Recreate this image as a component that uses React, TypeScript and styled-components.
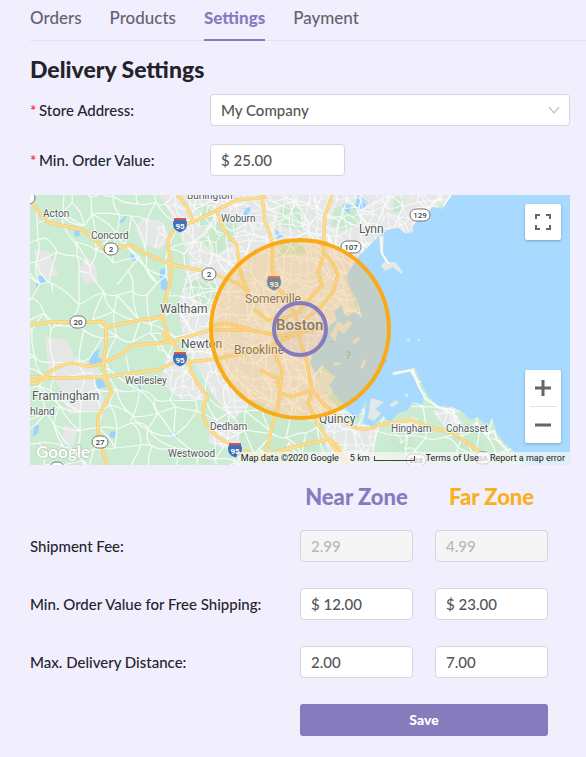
import React, { useState } from "react";
import styled, { createGlobalStyle } from "styled-components";

const purple = "#867bbd";
const orange = "#fbaf1b";

const GlobalStyle = createGlobalStyle`
  * { box-sizing: border-box; }
  body {
    margin: 0;
    background: #f1effd;
    color: #26232f;
    font-family: Lato, "Open Sans", sans-serif;
    font-size: 15px;
    line-height: 20px;
  }
  button, input, select { font: inherit; }
`;

const Page = styled.main`
  padding: 0 16px 22px 30px;
`;

const Tabs = styled.nav`
  display: flex;
  gap: 28px;
  height: 41px;
  margin-right: -16px;
  border-bottom: 1px solid #e3e0f0;
`;

const Tab = styled.a<{ $active?: boolean }>`
  height: 41px;
  padding-top: 8px;
  color: ${(p) => (p.$active ? purple : "#646270")};
  border-bottom: 2px solid ${(p) => (p.$active ? purple : "transparent")};
  font-size: 17px;
  font-weight: ${(p) => (p.$active ? 900 : 500)};
  text-decoration: none;
`;

const Title = styled.h1`
  margin: 14px 0 11px;
  color: #242329;
  font-family: "Lato Black", Lato, sans-serif;
  font-size: 23px;
  font-weight: 900;
  line-height: 28px;
`;

const FormRow = styled.div`
  display: grid;
  grid-template-columns: 1fr 2fr;
  align-items: center;
  margin-bottom: 18px;
`;

const Label = styled.label<{ $required?: boolean }>`
  font-family: "Lato Medium", Lato, sans-serif;
  font-weight: 500;
  &::before {
    content: ${(p) => (p.$required ? '"*"' : "none")};
    display: inline-block;
    width: 9px;
    color: #f5222d;
  }
`;

const Input = styled.input`
  width: 100%;
  height: 32px;
  padding: 0 10px;
  border: 1px solid #d6d4dc;
  border-radius: 4px;
  background: #fff;
  color: #555;
  font-family: "Lato Medium", Lato, sans-serif;
  font-weight: 500;
  &:disabled {
    background: #f5f5f5;
    color: #b8b8b8;
  }
`;

const ShortField = styled.div`
  width: 37.5%;
`;

const SelectBox = styled.div`
  display: grid;
  align-items: center;
  > * { grid-area: 1 / 1; }
  > svg {
    justify-self: end;
    margin-right: 10px;
    pointer-events: none;
  }
`;

const Select = styled.select`
  appearance: none;
  width: 100%;
  height: 32px;
  padding: 0 30px 0 10px;
  border: 1px solid #d6d4dc;
  border-radius: 4px;
  background: #fff;
  color: #555;
  font-family: "Lato Medium", Lato, sans-serif;
  font-weight: 500;
`;

const MapFrame = styled.section`
  position: relative;
  height: 270px;
  margin-top: 19px;
  overflow: hidden;
  font-family: Roboto, sans-serif;
`;

const MapDrawing = styled.svg`
  display: block;
  width: 100%;
  height: 100%;
`;

const MapControls = styled.div`
  position: absolute;
  top: 9px;
  right: 9px;
  bottom: 22px;
  display: flex;
  flex-direction: column;
  justify-content: space-between;
`;

const ControlGroup = styled.div`
  display: flex;
  flex-direction: column;
  align-items: center;
  width: 36px;
  border-radius: 2px;
  background: #fff;
  box-shadow: 0 1px 3px rgba(0, 0, 0, 0.25);
`;

const ControlButton = styled.button`
  display: grid;
  place-items: center;
  width: 36px;
  height: 36px;
  padding: 0;
  border: 0;
  background: transparent;
`;

const ControlRule = styled.span`
  width: 27px;
  height: 1px;
  background: #e2e2e2;
`;

const Attribution = styled.footer`
  position: absolute;
  right: 0;
  bottom: 0;
  display: flex;
  align-items: center;
  gap: 11px;
  height: 13px;
  padding: 0 5px 0 4px;
  background: rgba(245, 245, 245, 0.72);
  color: #222;
  font-family: Roboto, sans-serif;
  font-size: 9px;
  line-height: 13px;
  white-space: nowrap;
  a { color: inherit; text-decoration: none; }
`;

const Scale = styled.span`
  display: flex;
  align-items: center;
  gap: 4px;
`;

const ScaleBar = styled.i`
  width: 41px;
  height: 5px;
  border: solid #444;
  border-width: 0 1px 1px;
`;

const Zones = styled.section`
  padding-top: 18px;
`;

const ZoneRow = styled.div`
  display: grid;
  grid-template-columns: 2fr 1fr 1fr;
  align-items: center;
  margin-bottom: 26px;
`;

const ZoneCell = styled.div`
  padding-right: 22px;
`;

const ZoneTitle = styled.h2<{ $tone: string }>`
  margin: 0;
  color: ${(p) => p.$tone};
  font-family: "Lato Black", Lato, sans-serif;
  font-size: 22px;
  font-weight: 900;
  line-height: 28px;
  text-align: center;
  white-space: nowrap;
`;

const ZoneHeader = styled(ZoneRow)`
  margin-bottom: 19px;
`;

const Actions = styled.div`
  display: flex;
  padding: 0 22px 0 50%;
`;

const SaveButton = styled.button`
  flex: 1;
  height: 32px;
  border: 0;
  border-radius: 3px;
  background: ${purple};
  color: #fff;
  font-size: 14px;
  font-weight: 900;
`;

const water =
  "M450 195L443 209L433 207L425 215L413 222L413 232L405 234L399 228L390 229L380 235L367 248L357 258L347 275L350 288L358 302L362 318L355 312L346 317L341 306L334 311L337 320L329 326L327 333L318 343L322 350L313 353L310 363L315 373L322 365L335 377L327 387L342 402L347 411L357 419L367 400L363 423L373 427L383 416L390 422L398 413L408 410L413 402L423 405L423 395L415 380L410 372L393 375L392 372L415 368L420 380L427 395L438 406L453 407L463 412L470 420L478 417L487 427L492 418L497 433L503 442L515 452L523 465H570V195Z";

const urbanAreas = [
  "M160 195H450L413 232L380 235L345 278L360 318L312 355L322 391L347 417L326 424L280 414L252 399L233 421L210 390L184 345L178 307L190 260L177 227Z",
  "M143 217L163 222L171 241L158 249L143 244L135 229Z",
  "M34 249L49 252L58 275L39 279Z",
  "M86 257L95 264L98 281L85 284L79 270Z",
  "M45 337L67 340L74 356L98 368L105 408L69 414L60 387L49 374Z",
  "M168 354L193 369L205 400L180 399L160 382Z",
  "M211 421L237 424L250 438L230 450L208 442Z",
  "M325 423L379 425L374 448L361 465H341L325 445Z",
  "M387 421L416 417L422 430L401 444Z",
  "M432 411L453 409L463 424L447 430Z",
  "M65 424L77 430L74 446L61 442Z",
];

const parks = [
  "M196 205L211 204L214 222L201 229Z",
  "M220 220L237 223L235 242L215 256L199 241Z",
  "M282 202L306 212L302 231L276 225Z",
  "M334 208L354 204L360 224L342 231L331 225Z",
  "M281 241L301 238L306 253L278 257Z",
  "M205 275L219 284L210 306L193 299L185 285Z",
  "M235 418L253 408L280 418L322 424L326 445L285 465H255L239 440Z",
  "M394 196L404 199L402 211L393 213Z",
  "M390 435L408 430L414 443L407 456L393 456Z",
  "M441 431L468 424L480 436L486 455L464 450Z",
];

const ponds = [
  "M160 270L165 268L165 277L169 280L167 291L161 289Z",
  "M120 221L127 215L124 222L118 224Z",
  "M130 254L137 254L135 262L131 259Z",
  "M74 231L79 230L80 236L75 237Z",
  "M37 277L43 275L46 283L40 283L36 288Z",
  "M90 356L100 348L98 357L106 362L103 366L99 362L89 366Z",
  "M97 375L104 382L106 387L98 389L95 381Z",
  "M34 426L39 425L38 433L33 437Z",
  "M111 431L117 432L114 439L109 436Z",
  "M244 208L252 207L248 214L243 218Z",
  "M275 229L284 236L277 239Z",
  "M344 203L351 206L349 214L342 209Z",
  "M358 195L368 203L360 213L354 209Z",
  "M136 386L141 386L140 391L135 389Z",
  "M172 432L178 433L176 438L171 437Z",
];

const highways = [
  "M30 198L37 210Q44 219 50 223L83 230Q91 235 102 247Q113 249 130 245Q148 256 173 265L210 272L237 283L248 292",
  "M267 197L237 200L217 210L193 222Q177 225 173 232Q165 240 170 255Q173 267 169 285L163 312Q162 325 172 343L187 360Q194 382 208 397Q199 413 207 425Q216 439 233 445L260 458Q286 447 327 440",
  "M177 195Q188 204 193 222",
  "M262 195L265 222Q274 235 272 265L275 285L287 298L299 325L300 340L307 363L312 390L308 403L317 423L327 438L347 465",
  "M312 390Q330 414 353 427Q366 432 379 425L410 420L433 428L453 433L470 445L487 457",
  "M30 325L50 322L103 322L107 327L140 320L162 317",
  "M105 322Q108 343 103 363L105 380L112 392Q105 403 98 417L98 433L107 465",
  "M30 383Q43 384 47 374Q62 363 73 363Q90 369 103 363L120 355L133 345L170 342L210 330L250 330L280 336L323 328",
  "M30 377L63 378L103 377L157 370L173 363L210 360L230 356L260 350L300 333",
  "M332 195L325 215L323 252L333 263L338 275L333 292L320 308L305 319",
  "M323 257L318 272L322 285L313 295L298 312",
  "M217 212L225 232L237 245L240 272L248 292L245 296",
  "M260 370L277 378L280 392L290 397L312 390M280 392L278 407L272 427L263 465",
  "M275 345L275 355L282 370L280 392M211 326L225 323L250 329M254 309L267 320L285 318L302 311",
  "M327 438L337 445L348 465M163 333L167 343",
];

const seeded = (a: number, b: number) => {
  const v = Math.sin(a * 91.7 + b * 47.3) * 4375.5;
  return v - Math.floor(v);
};

const streetMesh = (x0: number, y0: number, w: number, h: number, step: number) => {
  const at = (i: number, j: number) =>
    [
      Math.round(x0 + (i + seeded(i, j) * 0.9) * step),
      Math.round(y0 + (j + seeded(j + 31, i) * 0.9) * step),
    ];
  const parts: string[] = [];
  for (let j = -1; j * step < h; j++) {
    for (let i = -1; i * step < w; i++) {
      const [x, y] = at(i, j);
      const bend = (seeded(i, j + 9) - 0.5) * step * 0.5;
      const links = [at(i + 1, j), at(i, j + 1), at(i + 1, j + 1)];
      links.forEach(([tx, ty], k) => {
        if (seeded(i + k * 17, j) > (k === 2 ? 0.65 : 0.23)) {
          parts.push(`M${x} ${y}Q${Math.round((x + tx) / 2 + bend)} ${Math.round((y + ty) / 2 - bend)} ${tx} ${ty}`);
        }
      });
    }
  }
  return parts.join("");
};

const ruralStreets = streetMesh(30, 195, 540, 270, 19);
const cityStreets = streetMesh(160, 195, 290, 270, 9);

const places: [string, number, number, number][] = [
  ["Burlington", 187, 199, 10],
  ["Acton", 43, 217, 10],
  ["Concord", 91, 239, 10],
  ["Woburn", 221, 222, 10],
  ["Lynn", 359, 233, 12],
  ["Waltham", 160, 313, 12],
  ["Somerville", 245, 303, 12],
  ["Newton", 181, 348, 12],
  ["Brookline", 234, 354, 12],
  ["Wellesley", 125, 384, 10],
  ["Framingham", 32, 400, 12],
  ["hland", 30, 415, 10],
  ["Dedham", 210, 430, 10],
  ["Quincy", 319, 423, 12],
  ["Westwood", 168, 457, 10],
  ["Hingham", 391, 432, 10],
  ["Cohasset", 446, 432, 10],
];

const Shield = ({ x, y, n }: { x: number; y: number; n: string }) => (
  <g>
    <path d={`M${x - 6} ${y - 7}Q${x - 3} ${y - 5} ${x} ${y - 7}Q${x + 3} ${y - 5} ${x + 6} ${y - 7}Q${x + 11} ${y + 4} ${x} ${y + 8}Q${x - 11} ${y + 4} ${x - 6} ${y - 7}`} fill="#3f6fb5" stroke="#fff" strokeWidth=".8" />
    <path d={`M${x - 6} ${y - 6}H${x + 6}`} stroke="#d45454" strokeWidth="2" />
    <text x={x} y={y + 4} textAnchor="middle" fontSize="8" fontWeight="700" fill="#fff">{n}</text>
  </g>
);

const RouteBadge = ({ x, y, n = "" }: { x: number; y: number; n?: string }) => {
  const w = Math.max(14, n.length * 4 + 8);
  return (
    <g>
      <rect x={x - w / 2} y={y - 6} width={w} height="12" rx="6" fill="#fff" stroke="#777" />
      {n && <text x={x} y={y + 3} textAnchor="middle" fontSize="8" fontWeight="500" fill="#444">{n}</text>}
    </g>
  );
};

const RegionMap = () => (
  <MapDrawing viewBox="30 195 540 270" preserveAspectRatio="xMidYMid slice" role="img" aria-label="Delivery zones around Boston">
    <defs>
      <clipPath id="urban"><path d={urbanAreas.join("")} /></clipPath>
    </defs>
    <path d="M30 195H570V465H30Z" fill="#cbebd2" />
    <path d={urbanAreas.join("")} fill="#e6e8e8" />
    <path d={parks.join("")} fill="#c8e9cd" />
    <path d={ponds.join("")} fill="#9ed3fb" />
    <path d={ruralStreets} fill="none" stroke="#f8fbf8" strokeWidth="1.2" />
    <path d={cityStreets} fill="none" stroke="#f9fafa" strokeWidth=".9" clipPath="url(#urban)" />
    <path d={water} fill="#a8d9fe" />
    <g fill="#e4e9e7">
      <path d="M379 234L384 236L383 252L387 262L395 262L403 272L401 274L393 267L385 271L381 266L385 261L380 251Z" />
      <path d="M318 380L320 376L333 375L334 379L329 385L334 392L322 392Z" />
      <path d="M338 321L344 325L348 320L352 323L344 334L338 330L335 342L330 335Z" />
      <path d="M351 342L358 337L360 339L355 344Z" />
      <path d="M360 368L364 359L366 361L363 369Z" />
      <path d="M333 363L339 362L341 364L334 366Z" />
      <path d="M371 398L384 402L375 409L381 413L374 421L368 418Z" />
      <path d="M406 340L410 338L410 342Z" />
      <path d="M417 340L420 338L420 341Z" />
      <path d="M389 405L396 400L399 403L392 407Z" />
      <path d="M404 393L409 395L407 398Z" />
    </g>
    <path d="M346 352h4v3h-2v4M331 342h2M387 360l-2 2" fill="none" stroke="#78b99a" />
    <path d="M393 374L412 370L419 387L426 399L440 408L453 410L455 421L467 431L476 423L486 434L494 431L497 440L509 452M451 195L443 206M412 225L423 212L440 198M381 237L382 254L389 264" fill="none" stroke="#f8faf9" strokeWidth="2" />
    <path d={highways.join("")} fill="none" stroke="#f0ca71" strokeWidth="3.4" strokeLinejoin="round" />
    <path d={highways.join("")} fill="none" stroke="#fddd8c" strokeWidth="2.4" strokeLinejoin="round" />
    <g fill="#565b60" stroke="#fff" strokeWidth="2" strokeOpacity=".7" paintOrder="stroke">
      {places.map(([name, x, y, size]) => (
        <text key={name} x={x} y={y} fontSize={size}>{name}</text>
      ))}
      <text x="276" y="330" fontSize="15" fontWeight="500">Boston</text>
    </g>
    <Shield x={180} y={225} n="95" />
    <Shield x={180} y={359} n="95" />
    <Shield x={235} y={450} n="95" />
    <Shield x={274} y={283} n="93" />
    <RouteBadge x={111} y={249} n="2" />
    <RouteBadge x={209} y={274} n="2" />
    <RouteBadge x={78} y={322} n="20" />
    <RouteBadge x={100} y={442} n="27" />
    <RouteBadge x={351} y={247} n="107" />
    <RouteBadge x={420} y={215} n="129" />
    <RouteBadge x={28} y={198} />
    <RouteBadge x={416} y={460} n="228" />
    <RouteBadge x={483} y={458} n="3A" />
    <RouteBadge x={57} y={468} />
    <circle cx="300" cy="329" r="89" fill="#f9b655" fillOpacity=".31" stroke="#fbaa17" strokeWidth="4" />
    <circle cx="300" cy="329" r="26" fill="#a99ac8" fillOpacity=".08" stroke={purple} strokeWidth="4" />
    <text x="36" y="458" fontFamily="Lato" fontSize="17" fontWeight="700" fill="#fff" stroke="#a9b8ab" strokeWidth="1" paintOrder="stroke">Google</text>
  </MapDrawing>
);

const feeRows = [
  { id: "fee", label: "Shipment Fee:", near: "2.99", far: "4.99", locked: true },
  { id: "free", label: "Min. Order Value for Free Shipping:", near: "$ 12.00", far: "$ 23.00" },
  { id: "distance", label: "Max. Delivery Distance:", near: "2.00", far: "7.00" },
];

export default function App() {
  const [active, setActive] = useState("Settings");
  return (
    <>
      <GlobalStyle />
      <Page>
        <Tabs>
          {["Orders", "Products", "Settings", "Payment"].map((tab) => (
            <Tab
              key={tab}
              href={`#${tab.toLowerCase()}`}
              $active={tab === active}
              aria-current={tab === active ? "page" : undefined}
              onClick={() => setActive(tab)}
            >
              {tab}
            </Tab>
          ))}
        </Tabs>
        <Title>Delivery Settings</Title>
        <FormRow>
          <Label $required htmlFor="address">Store Address:</Label>
          <SelectBox>
            <Select id="address"><option>My Company</option></Select>
            <svg width="12" height="12" viewBox="0 0 12 12" aria-hidden="true">
              <path d="M1 3L6 9L11 3" fill="none" stroke="#c4c4c4" strokeWidth="1.2" />
            </svg>
          </SelectBox>
        </FormRow>
        <FormRow>
          <Label $required htmlFor="minimum">Min. Order Value:</Label>
          <ShortField><Input id="minimum" defaultValue="$ 25.00" /></ShortField>
        </FormRow>
        <MapFrame>
          <RegionMap />
          <MapControls>
            <ControlGroup>
              <ControlButton aria-label="Toggle fullscreen">
                <svg width="18" height="18" viewBox="0 0 18 18">
                  <path d="M2 6V2H6M12 2H16V6M16 12V16H12M6 16H2V12" fill="none" stroke="#666" strokeWidth="2" />
                </svg>
              </ControlButton>
            </ControlGroup>
            <ControlGroup>
              <ControlButton aria-label="Zoom in">
                <svg width="18" height="18" viewBox="0 0 18 18"><path d="M1 9H17M9 1V17" stroke="#666" strokeWidth="3" /></svg>
              </ControlButton>
              <ControlRule />
              <ControlButton aria-label="Zoom out">
                <svg width="18" height="18" viewBox="0 0 18 18"><path d="M1 9H17" stroke="#666" strokeWidth="3" /></svg>
              </ControlButton>
            </ControlGroup>
          </MapControls>
          <Attribution>
            <span>Map data ©2020 Google</span>
            <Scale>5 km <ScaleBar /></Scale>
            <a href="#terms">Terms of Use</a>
            <a href="#report">Report a map error</a>
          </Attribution>
        </MapFrame>
        <Zones>
          <ZoneHeader>
            <span />
            <ZoneCell><ZoneTitle $tone={purple}>Near Zone</ZoneTitle></ZoneCell>
            <ZoneCell><ZoneTitle $tone={orange}>Far Zone</ZoneTitle></ZoneCell>
          </ZoneHeader>
          {feeRows.map((row) => (
            <ZoneRow key={row.id}>
              <Label htmlFor={`${row.id}-near`}>{row.label}</Label>
              <ZoneCell><Input id={`${row.id}-near`} defaultValue={row.near} disabled={row.locked} /></ZoneCell>
              <ZoneCell><Input aria-label={`${row.label} Far Zone`} defaultValue={row.far} disabled={row.locked} /></ZoneCell>
            </ZoneRow>
          ))}
          <Actions><SaveButton>Save</SaveButton></Actions>
        </Zones>
      </Page>
    </>
  );
}
